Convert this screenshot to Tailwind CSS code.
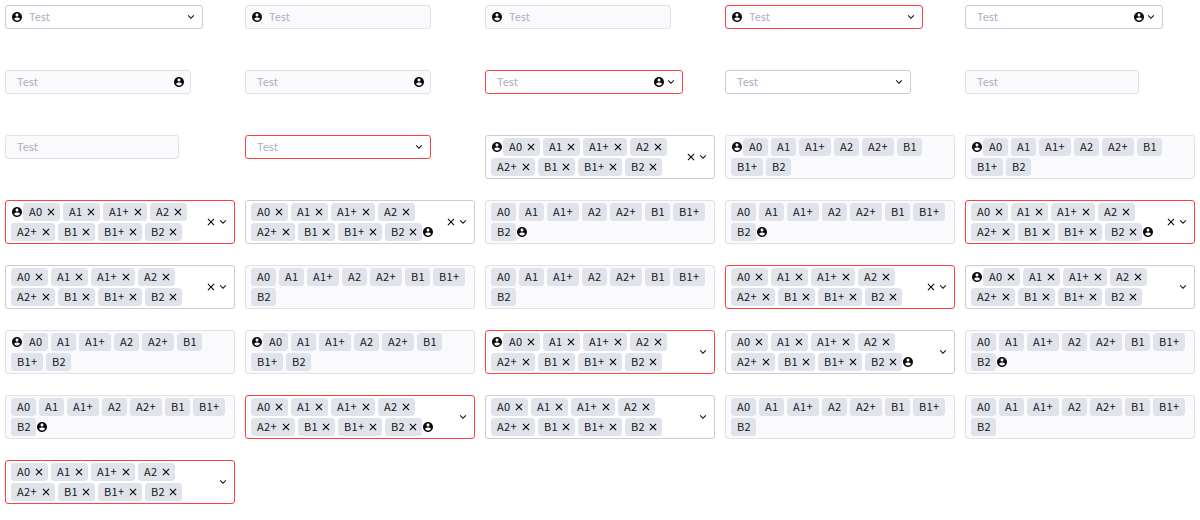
<!DOCTYPE html>
<html lang="en">
<head>
<meta charset="utf-8">
<title>Select states</title>
<script src="https://cdn.jsdelivr.net/npm/@tailwindcss/browser@4"></script>
</head>
<body class="bg-white font-['Noto_Sans_CJK_SC',sans-serif] text-[11px] leading-[16px] text-[#16161d]">
<svg class="hidden">
  <symbol id="user" viewBox="0 0 24 24"><path fill-rule="evenodd" d="M12 2C17.52 2 22 6.48 22 12C22 17.52 17.52 22 12 22C6.48 22 2 17.52 2 12C2 6.48 6.48 2 12 2ZM6.02332 15.4163C7.49083 17.6069 9.69511 19 12.1597 19C14.6243 19 16.8286 17.6069 18.2961 15.4163C16.6885 13.9172 14.5312 13 12.1597 13C9.78821 13 7.63095 13.9172 6.02332 15.4163ZM12 11C13.6569 11 15 9.65685 15 8C15 6.34315 13.6569 5 12 5C10.3431 5 9 6.34315 9 8C9 9.65685 10.3431 11 12 11Z"/></symbol>
  <symbol id="down" viewBox="0 0 24 24"><path d="M12 13.172l4.95-4.95 1.414 1.414L12 16 5.636 9.636 7.05 8.222z"/></symbol>
  <symbol id="close" viewBox="1 1 22 22"><path d="M12 10.586l4.95-4.95 1.414 1.414-4.95 4.95 4.95 4.95-1.414 1.414-4.95-4.95-4.95 4.95-1.414-1.414 4.95-4.95-4.95-4.95L7.05 5.636z"/></symbol>
</svg>
<main id="grid" class="grid w-[1200px] grid-cols-5 auto-rows-[65px] items-start justify-items-start px-[5px] pt-[5px] gap-x-[10px]"></main>
<script>
const icon = (id) => `<svg class="size-3 shrink-0 fill-[#0b0b0d]"><use href="#${id}"/></svg>`;
const tone = {
  n: 'border-[#cacada] bg-white',
  d: 'border-[#e0e1e9] bg-[#fafafc]',
  e: 'border-[#ff4040] bg-white',
};
// Each entry: tone (n normal, d disabled, e error) + icon side (l, r, -)
const single = (s) => {
  const [t, side] = s;
  return `<div class="flex h-6 items-center rounded-[3px] border px-[5px] ${tone[t]}">
    ${side === 'l' ? icon('user') : ''}<span class="w-[162px] px-[6px] pb-[2px] text-[#acaebf]">Test</span>${side === 'r' ? icon('user') : ''}${t !== 'd' ? icon('down') : ''}</div>`;
};
const levels = ['A0', 'A1', 'A1+', 'A2', 'A2+', 'B1', 'B1+', 'B2'];
const multi = (s, clearable) => {
  const [t, side] = s;
  const open = t !== 'd';
  const user = `<span class="flex h-[18px] items-center">${icon('user')}</span>`;
  const chips = levels.map((l, i) => {
    const w = l.length === 3 ? 'w-[20px]' : 'w-[13px]';
    const gap = i < 7 ? 'mr-[3px]' : '';
    return `<span class="flex h-[18px] items-center gap-[3px] rounded-[3.5px] bg-[#e1e3ea] pl-[6px] ${open ? 'pr-[3px]' : 'pr-[6px]'} ${gap}"><span class="${w} pb-[2px] tracking-[0.35px] whitespace-nowrap">${l}</span>${open ? icon('close') : ''}</span>`;
  }).join('');
  return `<div class="flex h-11 w-[230px] items-center rounded-[3px] border px-[5px] ${tone[t]}">
    <div class="flex flex-1 flex-wrap gap-y-[2px]">${side === 'l' ? user : ''}${chips}${side === 'r' ? user : ''}</div>${open && clearable ? icon('close') : ''}${open ? icon('down') : ''}</div>`;
};
const states = ['nl', 'dl', 'dl', 'el', 'nr', 'dr', 'dr', 'er', 'n-', 'd-', 'd-', 'e-'];
document.getElementById('grid').innerHTML =
  states.map(single).join('') +
  states.map((s) => multi(s, true)).join('') +
  states.map((s) => multi(s, false)).join('');
</script>
</body>
</html>
